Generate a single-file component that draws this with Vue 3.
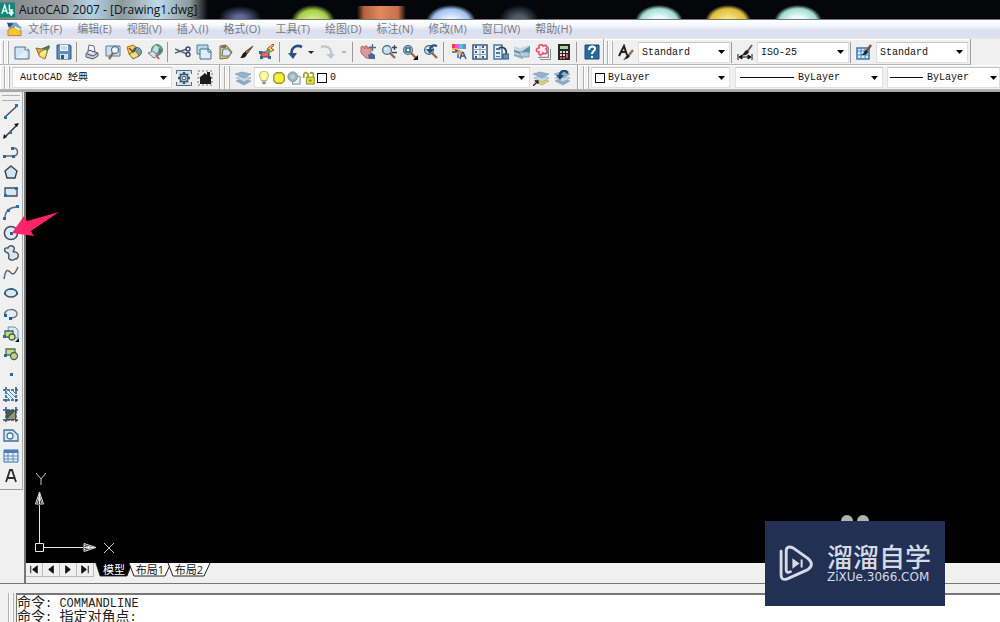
<script setup>
const menus = ['文件(F)', '编辑(E)', '视图(V)', '插入(I)', '格式(O)', '工具(T)', '绘图(D)', '标注(N)', '修改(M)', '窗口(W)', '帮助(H)']

const glass = (x, y) => `<path d="M${x + 3} ${y + 3}l5 5" stroke="#9a6a42" stroke-width="2.400"/><circle cx="${x}" cy="${y}" r="4.400" fill="#c5dff1" stroke="#54677b" stroke-width="1.300"/><path d="M${x - 2} ${y}q0-2 2-2" fill="none" stroke="#fff"/>`
const hatchFrame = (fill) => `<path d="M3 3h10v10H3z" fill="${fill}"/><path d="M0 3h16M0 13h16M3 0v16M13 0v16" stroke="#28517a" stroke-width="1.500" stroke-dasharray="3 1"/>`
const sheets = (mid, low) => `<path d="M1 11l6-2 9 2-7 4z" fill="${low}" stroke="#7b93a6" stroke-width=".5"/><path d="M1 8l6-2 9 2-7 4z" fill="${mid}" stroke="#7b93a6" stroke-width=".5"/><path d="M0 4l7-2 9 2-7 4z" fill="#8fb4d0" stroke="#6a8ba5" stroke-width=".5"/>`

const icons = {
  new: '<path d="M1 3h10l4 3v9H1z" fill="#cfe4f4" stroke="#4c7394"/><path d="M11 3v3h4" fill="#fff" stroke="#4c7394"/><path d="M2 14L12 6v8z" fill="#f2faff" opacity=".6"/>',
  open: '<path d="M1 4l5 1 8-3-4 12-6-3z" fill="#e3b14a" stroke="#8a6a2c"/><path d="M4 9l10-7-4 13-6-3z" fill="#ffe07a" stroke="#96762f"/><path d="M7 5l7-4 1 3-4 3z" fill="#4d7a66"/><path d="M6 10l5-4" stroke="#fff5bd"/>',
  save: '<path d="M1 1h13l1 1v13H1z" fill="#5b8fc0" stroke="#2c587f"/><path d="M4 1h8v6H4z" fill="#f2f8fc"/><path d="M5 3h6M5 5h6" stroke="#a8bccb"/><path d="M4 10h8v5H4z" fill="#d5e1e9"/><path d="M5 11h3v4H5z" fill="#315977"/>',
  print: '<path d="M4 7l1-6 5 1 1 6z" fill="#f6f8fc" stroke="#66708b"/><path d="M2 10l3-4 9 3v3l-5 3-7-2z" fill="#c5cbd9" stroke="#505a77"/><path d="M3 10l6 2 5-3" fill="none" stroke="#4f5775"/><path d="M5 8l5 2" stroke="#fff"/>',
  preview: '<path d="M1 2h14v10H1z" fill="#cfe2f2" stroke="#557da1"/><path d="M8 9l-4 6" stroke="#946b4d" stroke-width="2.400"/><circle cx="10" cy="6" r="3.500" fill="#f4fbff" stroke="#5b7891" stroke-width="1.300"/>',
  publish: '<path d="M1 3l6-2 6 4-3 6-7-1z" fill="#f7cc5a" stroke="#a86f28"/><circle cx="11" cy="8" r="4.500" fill="#72a8ae" stroke="#496d82"/><path d="M3 4l4 4 3-4" fill="none" stroke="#6a3d30" stroke-width="1.300"/><path d="M3 10l7-3 3 5-6 3z" fill="#f1dd7c" stroke="#7b6b3d"/>',
  globe: '<circle cx="10" cy="6" r="5.400" fill="#67a987" stroke="#537781"/><path d="M8 1l5 3-3 5-5-2z" fill="#c3dfd8"/><path d="M12 3l3 4-4 4z" fill="#457b9d"/><path d="M1 9l5-2 5 5-4 2z" fill="#d8dfe9" stroke="#6a7894"/><path d="M9 11l3 4" stroke="#c35c4e" stroke-width="2"/>',
  cut: '<path d="M0 5l12 5M0 9l12-4" stroke="#5b6575" stroke-width="1.400"/><circle cx="13" cy="5" r="2" fill="none" stroke="#344c74" stroke-width="1.400"/><circle cx="13" cy="10.500" r="2" fill="none" stroke="#344c74" stroke-width="1.400"/>',
  copy: '<path d="M1 1h11v9H1z" fill="#b9d7ec" stroke="#547c9d"/><path d="M4 5h9l2 2v8H4z" fill="#dceef9" stroke="#416e91"/><path d="M12 5v3h3" fill="none" stroke="#416e91"/>',
  paste: '<path d="M3 2l6-1 6 7-4 6-8 1z" fill="#e5c76d" stroke="#7b6542"/><path d="M5 1h4v3H4z" fill="#77736e"/><path d="M6 5h5l3 4-2 3H5z" fill="#d8ebf4" stroke="#547695"/>',
  brush: '<path d="M15 2l-6 8-2-2z" fill="#a0664c" stroke="#5a4038"/><path d="M7 8l2 2c-1 4-4 4-7 4 2-1 2-5 5-6z" fill="#171b22"/>',
  spark: '<path d="M14 0L8 5l3 1-4 4 8-4-3-2 3-3z" fill="#ffdf3e" stroke="#a7492b"/><path d="M2 8h8v5H2z" fill="#f0665a" stroke="#7b2739"/><path d="M7 6h4v3H7z" fill="#49a5a0"/><path d="M0 7h3v3H0zM9 12h3v3H9zM1 12h3v3H1z" fill="#2d6a93"/>',
  undo: '<path d="M15 3C9 0 3 4 5 11" fill="none" stroke="#284f82" stroke-width="2.600"/><path d="M1 9h9l-4 6z" fill="#284f82"/>',
  redo: '<path d="M1 3c6-2 11 1 10 8" fill="none" stroke="#c1c6cc" stroke-width="2.400"/><path d="M6 10h9l-4 5z" fill="#c1c6cc"/>',
  pan: '<path d="M1 3l2-1 2 3 0-3 2 0 1 3 1-2 2 0v7l-2 4H6L1 9z" fill="#dd9a97" stroke="#a86669"/><path d="M12.500 0v7M9 3.500h7" stroke="#476c92" stroke-width="1.300"/><path d="M8 11l4-2 3 2v4H9z" fill="#426c91"/>',
  zoom: glass(6, 6) + '<path d="M11 3.500h5M13.500 1v5M11 8.500h5" stroke="#334b64" stroke-width="1.300"/>',
  zoomwin: glass(6, 6) + '<path d="M4 4h4v4H4z" fill="#fff" stroke="#31658f" stroke-width="1.500"/><path d="M16 11v5h-5z" fill="#111"/>',
  zoomprev: glass(6, 6) + '<path d="M14 2C9 0 7 3 7 6" fill="none" stroke="#27547d" stroke-width="2.200"/><path d="M3 5h8L7 10z" fill="#27547d"/>',
  props: '<path d="M1 0h3v5H1z" fill="#ff365c"/><path d="M4 0h4v5H4z" fill="#ff4de0"/><path d="M8 0h4v5H8z" fill="#48c6db"/><path d="M12 0h3v5h-3z" fill="#568df2"/><path d="M1 4h6v2H1z" fill="#ffb33e"/><path d="M1 8h6v6M11 8l-2 7M12 8l3 7M10 12h4M4 6l9 3" fill="none" stroke="#425c78" stroke-width="1.500"/><path d="M5 8l5-2 1 3-4 2z" fill="#e8a46d"/>',
  design: '<path d="M1 1h14v14H1z" fill="#eff4f8" stroke="#3c5e7d" stroke-width="1.600"/><path d="M8 1v14M1 5.500h14M1 10.500h14" stroke="#8a9eb1"/><path d="M3 3h3M10 3h3M3 8h3M10 8h3M3 13h3M10 13h3" stroke="#345978" stroke-width="2" stroke-dasharray="2 1"/>',
  palette: '<path d="M1 1h8v14H1z" fill="#e3edf5" stroke="#48779d" stroke-width="1.500"/><path d="M3 4h4v2H3zM3 8h4v2H3zM3 12h4v1H3z" fill="#477b9e"/><path d="M6 4c6-2 8 2 7 7" fill="none" stroke="#283d58" stroke-width="1.700"/><path d="M10 10h6v5h-6z" fill="#6a93b4" stroke="#32557a"/>',
  sheet: '<path d="M0 2l6 2 10-3v10l-4 3-12-3z" fill="#c6d9df"/><path d="M0 6l7 2 9-6v6l-6 3-10-3z" fill="#5893a8"/><path d="M6 8h9v5H6z" fill="#b3cbd8" stroke="#668ba1" stroke-width=".6"/><path d="M0 11l9 3" stroke="#8badbb" stroke-width="2"/>',
  markup: '<path d="M5 5h8v8H5z" fill="#fff" stroke="#a4aab7"/><path d="M4 8c-4 0-3-4 0-4-1-4 3-4 4-2 4-2 5 2 3 3 3 3 0 6-3 4-2 3-5 2-4-1z" fill="#ffe7e9" stroke="#e64f64" stroke-width="1.600"/><path d="M3 13.500h10.500V3M5 15.500h10.500V5" fill="none" stroke="#888f9e"/>',
  calc: '<path d="M2 0h12v16H2z" fill="#292629"/><path d="M4 2h8v3H4z" fill="#a6d098"/><path d="M4 7h2v2H4zM7 7h2v2H7zM10 7h2v2h-2zM4 10h2v2H4zM7 10h2v2H7z" fill="#dbd9dc"/><path d="M10 10h2v4h-2zM4 13h2v2H4zM7 13h2v2H7z" fill="#e35a50"/>',
  help: '<path d="M1 1h14v14H1z" fill="#286a9e" stroke="#194a73"/><path d="M5 6c0-5 7-4 6-1 0 2-3 2-3 5" fill="none" stroke="#fff" stroke-width="2"/><circle cx="8" cy="13" r="1.200" fill="#fff"/>',
  gear: '<path d="M.5 4V.5h15V4M.5 12v3.500h15V12" fill="#d6e1ea" stroke="#456e8f"/><path d="M8 2v12M2 8h12M4 4l8 8M4 12l8-8" stroke="#385471" stroke-width="2.300"/><circle cx="8" cy="8" r="4" fill="#b8cbd9" stroke="#385471" stroke-width="1.400"/><circle cx="8" cy="8" r="1.800" fill="#fff" stroke="#385471"/>',
  home: '<path d="M1 1h14v14H1z" fill="none" stroke="#777" stroke-dasharray="2 2"/><path d="M2 8l6-5 2 2V2h3v4l2 2h-1v6H3V8z" fill="#191b1e"/>',
  layers: sheets('#c8d9e6', '#8fabc0'),
  layerprev: sheets('#c8d9e6', '#edda4b') + '<path d="M0 16l5-5M2 11h3v3" fill="none" stroke="#222" stroke-width="1.300"/>',
  layerback: sheets('#c8d9e6', '#8fabc0') + '<path d="M14 3C10-1 6 1 6 6" fill="none" stroke="#214c74" stroke-width="2.500"/><path d="M2 5h8l-4 5z" fill="#214c74"/>',
  textstyle: '<path d="M1 12L6 2l3 9M3 8h5" fill="none" stroke="#222" stroke-width="2"/><path d="M15 6l-4 5" stroke="#9c7052" stroke-width="2.500"/><path d="M10 10l2 2c-2 3-4 3-7 4 3-2 3-5 5-6z" fill="#202226"/>',
  dimstyle: '<path d="M1 10v6M15 10v6M2 13h12M2 13l3-2v4zM14 13l-3-2v4z" stroke="#111" fill="#111"/><path d="M15 1l-5 7" stroke="#796251" stroke-width="2"/><path d="M10 6l2 2c-2 4-5 3-8 4 3-2 3-5 6-6z" fill="#222"/>',
  tablestyle: '<path d="M1 4h12v11H1z" fill="#d7eafa" stroke="#3277b3" stroke-width="1.500"/><path d="M1 7h12M1 11h12M5 4v11M9 4v11" stroke="#4c89bd"/><path d="M15 1l-5 7" stroke="#76543c" stroke-width="2.500"/><path d="M10 6l2 2c-1 3-4 3-7 3 3-1 3-4 5-5z" fill="#222"/>',
  bulb: '<path d="M5 11c0-2-2-3-2-6a5 5 0 0 1 10 0c0 3-2 4-2 6z" fill="#fff7a3" stroke="#a79c5a"/><path d="M6 12h4v3H6z" fill="#8291a4"/>',
  sun: '<path d="M5 2h6l3 3v6l-3 3H5l-3-3V5z" fill="#f8ed38" stroke="#9a982b" stroke-width="1.500"/>',
  freeze: '<path d="M8 6h7v9H6z" fill="#e6f1f8" stroke="#6a8698"/><circle cx="6.500" cy="6.500" r="5.500" fill="#9eb6bd" stroke="#788f98"/><circle cx="6.500" cy="6.500" r="2.500" fill="#bdd3c8"/>',
  lock: '<path d="M2 8V4q2-5 5 0v3" fill="none" stroke="#a1a22b" stroke-width="2"/><path d="M5 7h9v8H5z" fill="#e4de39" stroke="#85882c"/><path d="M13 7V3q-2-2-4 0" fill="none" stroke="#a1a22b" stroke-width="2"/><path d="M8 10h3v2H8z" fill="#8d8a28"/>',
  line: '<path d="M2 14L14 3" stroke="#36475a" stroke-width="1.300"/><path d="M1 13h3v3H1zM12 1h3v3h-3z" fill="#2c74ad"/>',
  xline: '<path d="M2 14L14 2" stroke="#27323e" stroke-width="1.500"/><path d="M0 16l1-5 3 3zM16 0l-5 1 3 3z" fill="#171b21"/><path d="M6 8h3v3H6z" fill="#2b75ac"/>',
  pline: '<path d="M2 12h8M10 4c6 0 6 8 0 8" fill="none" stroke="#5a697a" stroke-width="1.500"/><path d="M0 11h3v3H0zM9 11h3v3H9zM8 3h3v3H8z" fill="#226ba5"/>',
  polygon: '<path d="M8 2l6 5-2 7H4L2 7z" fill="#d2e5f2" stroke="#38434e" stroke-width="1.400"/>',
  rect: '<path d="M2 4h12v8H2z" fill="#d4e7f4" stroke="#3d4c5d" stroke-width="1.300"/><path d="M1 10h3v3H1zM12 3h3v3h-3z" fill="#286c9f"/>',
  arc: '<path d="M2 14C2 7 7 3 14 3" fill="none" stroke="#5c6c7c" stroke-width="1.500"/><path d="M0 13h3v3H0zM4 5h3v3H4zM13 1h3v3h-3z" fill="#286fa7"/>',
  circle: '<circle cx="8" cy="8" r="6.600" fill="#dbeaf3" stroke="#3e4b58" stroke-width="1.500"/><path d="M7 7h3v3H7z" fill="#1b6297"/>',
  cloud: '<path d="M5 8C0 7 1 2 5 3c1-4 8-2 6 2-1 1-1 2 0 2 5-1 6 7 1 7-2 2-8 1-6-3 0-2-1-2-1-3z" fill="#dce6ec" stroke="#485461" stroke-width="1.400"/>',
  spline: '<path d="M1 14C3 1 6 6 8 8s4 1 7-6" fill="none" stroke="#5d6770" stroke-width="1.500"/>',
  ellipse: '<ellipse cx="8" cy="8" rx="6" ry="4" fill="#d8e9f5" stroke="#37536e" stroke-width="1.500"/><path d="M1 7h2v3H1zM7 3h3v2H7zM13 7h2v3h-2z" fill="#21669c"/>',
  ellarc: '<path d="M2 9C0 2 15 2 14 8c0 4-4 4-7 4" fill="#e3ecf3" stroke="#69798a" stroke-width="1.500"/><path d="M1 8h3v3H1zM6 11h3v3H6z" fill="#1c6096"/>',
  insert: '<path d="M5 1h7l3 3v8H6z" fill="#d9ebf8" stroke="#6b91b0"/><path d="M2 5h8v6H2z" fill="#c6dc77" stroke="#3e626d" stroke-width="1.300"/><circle cx="9" cy="11" r="3" fill="#d8e69a" stroke="#47665b" stroke-width="1.300"/><path d="M0 9h3v3H0z" fill="#267099"/><path d="M16 12v4h-4z" fill="#111"/>',
  block: '<path d="M3 3h9v6H3z" fill="#cbdc73" stroke="#4c6d6f" stroke-width="1.300"/><circle cx="11" cy="10" r="3.500" fill="#bed37b" stroke="#466173" stroke-width="1.300"/><path d="M1 8h3v3H1z" fill="#267099"/>',
  point: '<path d="M7 7h3v3H7z" fill="#2d6c95"/>',
  hatch: hatchFrame('#e8f3fb') + '<path d="M3 5l8 8M5 3l8 8M9 3l4 4M3 9l4 4" stroke="#438bc0" stroke-width="1"/>',
  gradient: hatchFrame('#4a5750') + '<path d="M4 12l8-8v8z" fill="#8f9870"/>',
  region: '<path d="M1 3h9l5 5v6H1z" fill="#d8e9f5" stroke="#3d7197" stroke-width="1.300"/><circle cx="7" cy="9" r="3" fill="#f8fafb" stroke="#427aa3" stroke-width="1.300"/>',
  table: '<path d="M1 2h14v12H1z" fill="#e7f1f9" stroke="#3a6cb0"/><path d="M1 2h14v3H1z" fill="#4b7fbc"/><path d="M1 8h14M1 11h14M5 5v9M10 5v9" stroke="#618bbf"/>',
  mtext: '<path d="M3 14L7 2h2l4 12M5 10h6" fill="none" stroke="#292b2f" stroke-width="1.800"/>',
  drop: '<path d="M5 7h6l-3 3z" fill="#222"/>',
  dropoff: '<path d="M5 7h6l-3 3z" fill="#bbb"/>',
}

const standard = [
  ['new', 'open', 'save'],
  ['print', 'preview', 'publish', 'globe'],
  ['cut', 'copy', 'paste', 'brush', 'spark'],
  ['undo', 'drop', 'redo', 'dropoff'],
  ['pan', 'zoom', 'zoomwin', 'zoomprev'],
  ['props', 'design', 'palette', 'sheet', 'markup', 'calc'],
  ['help'],
]
const styles = [
  { icon: 'textstyle', value: 'Standard', label: '文字样式' },
  { icon: 'dimstyle', value: 'ISO-25', label: '标注样式' },
  { icon: 'tablestyle', value: 'Standard', label: '表格样式' },
]
const drawTools = ['line', 'xline', 'pline', 'polygon', 'rect', 'arc', 'circle', 'cloud', 'spline', 'ellipse', 'ellarc', 'insert', 'block', 'point', 'hatch', 'gradient', 'region', 'table', 'mtext']
const layerIcons = ['bulb', 'sun', 'freeze', 'lock']
const navPaths = ['M5 3v8M12 3v8L7 7z', 'M11 3v8L6 7z', 'M6 3v8l5-4z', 'M5 3v8l5-4zM12 3v8']
const tabs = ['模型', '布局1', '布局2']
</script>

<template>
  <div class="app">
    <header class="title">
      <svg class="logo" viewBox="0 0 16 16"><path d="M0 0h16v16H0z" fill="#168477" /><path d="M2 12L5 3l3 9M3 9h5M10 2v6h4M9 11h5M12 8v6" fill="none" stroke="#e5fff7" stroke-width="1.500" /><circle cx="12" cy="11" r="2" fill="none" stroke="#fff" /></svg>
      <span>AutoCAD 2007 - [Drawing1.dwg]</span>
    </header>

    <nav class="menu">
      <svg class="doc" viewBox="0 0 16 16"><path d="M3 1h7l5 5v9H3z" fill="#7ba4d2" /><path d="M1 9l5-3 9 4v5H1z" fill="#f4c437" stroke="#b7851d" /><path d="M0 1l7 1-5 5z" fill="#234d87" /><path d="M8 6l6 3" stroke="#fff0a3" stroke-width="2" /></svg>
      <button v-for="m in menus" :key="m" type="button">{{ m }}</button>
    </nav>

    <div class="row">
      <div class="bar standard">
        <i class="grip"></i>
        <div v-for="(group, g) in standard" :key="g" class="group">
          <button v-for="n in group" :key="n" type="button" class="tool" :class="{ slim: n.startsWith('drop') }" :aria-label="n"><svg viewBox="0 0 16 16" v-html="icons[n]"></svg></button>
        </div>
      </div>
      <div class="bar styles">
        <i class="grip"></i>
        <div v-for="s in styles" :key="s.label" class="group">
          <button type="button" class="tool wide" :aria-label="s.label"><svg viewBox="0 0 16 16" v-html="icons[s.icon]"></svg></button>
          <div class="combo style">
            <select :aria-label="s.label"><option>{{ s.value }}</option></select>
            <svg class="arrow" viewBox="0 0 7 4"><path d="M0 0h7L3.500 4z" /></svg>
          </div>
        </div>
      </div>
    </div>

    <div class="row second">
      <div class="bar workspaces">
        <i class="grip"></i>
        <div class="combo workspace">
          <select aria-label="工作空间"><option>AutoCAD 经典</option></select>
          <svg class="arrow" viewBox="0 0 7 4"><path d="M0 0h7L3.500 4z" /></svg>
        </div>
        <button v-for="n in ['gear', 'home']" :key="n" type="button" class="tool" :aria-label="n"><svg viewBox="0 0 16 16" v-html="icons[n]"></svg></button>
      </div>
      <div class="bar layers">
        <i class="grip"></i>
        <button type="button" class="tool wide" aria-label="图层"><svg viewBox="0 0 16 16" v-html="icons.layers"></svg></button>
        <div class="combo layer">
          <svg v-for="n in layerIcons" :key="n" class="state" viewBox="0 0 16 16" v-html="icons[n]"></svg>
          <i class="swatch"></i>
          <select aria-label="当前图层"><option>0</option></select>
          <svg class="arrow" viewBox="0 0 7 4"><path d="M0 0h7L3.500 4z" /></svg>
        </div>
        <button v-for="n in ['layerprev', 'layerback']" :key="n" type="button" class="tool" :aria-label="n"><svg viewBox="0 0 16 16" v-html="icons[n]"></svg></button>
      </div>
      <div class="bar properties">
        <i class="grip"></i>
        <div class="combo color">
          <i class="swatch"></i>
          <select aria-label="颜色"><option>ByLayer</option></select>
          <svg class="arrow" viewBox="0 0 7 4"><path d="M0 0h7L3.500 4z" /></svg>
        </div>
        <div class="combo linetype">
          <i class="stroke"></i>
          <select aria-label="线型"><option>ByLayer</option></select>
          <svg class="arrow" viewBox="0 0 7 4"><path d="M0 0h7L3.500 4z" /></svg>
        </div>
        <div class="combo weight">
          <i class="stroke short"></i>
          <select aria-label="线宽"><option>ByLayer</option></select>
          <svg class="arrow" viewBox="0 0 7 4"><path d="M0 0h7L3.500 4z" /></svg>
        </div>
      </div>
    </div>

    <main class="work">
      <aside class="side">
        <div class="palette">
          <i class="hgrip"></i>
          <div class="tools">
            <button v-for="n in drawTools" :key="n" type="button" class="tool" :aria-label="n"><svg viewBox="0 0 16 16" v-html="icons[n]"></svg></button>
          </div>
        </div>
        <svg class="pointer" viewBox="0 0 50 28"><path d="M2 22L14 5l3 5L49 1 21 20l3 5z" fill="#fa2468" /></svg>
      </aside>
      <section class="drawing">
        <div class="canvas">
          <svg class="ucs" viewBox="0 0 90 84">
            <g fill="none" stroke="#e6e6e6">
              <path d="M10.500 70V32M15 74.500h39M6.500 70.500h8v8h-8zM10.500 19l-4 12h8zM10.500 21v10M8.500 30l2-8 2 8M67 74.500l-12-4v8zM65 74.500H55M55 72.500l9 2-9 2" />
              <path d="M7 0l5 6 5-6M12 6v6M75 70l10 10M85 70L75 80" stroke="#c9c9c9" />
            </g>
          </svg>
          <div class="ears"><i></i><i></i></div>
        </div>
        <div class="sheets">
          <button v-for="(p, i) in navPaths" :key="i" type="button" class="nav" :aria-label="'nav ' + i"><svg viewBox="0 0 17 14"><path :d="p" fill="#111" stroke="#111" /></svg></button>
          <div class="tabs">
            <button v-for="(t, i) in tabs" :key="t" type="button" class="tab" :class="{ active: i === 0 }">
              <svg viewBox="0 0 44 14" preserveAspectRatio="none"><path d="M1 0l5 13h31l6-13" /></svg>
              <span>{{ t }}</span>
            </button>
          </div>
        </div>
      </section>
    </main>

    <section class="command">
      <i class="grip"></i>
      <div class="log">
        <p><b>命令</b>: COMMANDLINE</p>
        <p><b>命令</b>: <b>指定对角点</b>:</p>
      </div>
    </section>

    <div class="mark">
      <svg viewBox="0 0 34 36">
        <path d="M2 6v23q0 6 6 4l20-9q7-5 0-11L14 3Q7 0 7 6v18q0 4 4 2" fill="none" stroke="#d6dae5" stroke-width="2.800" stroke-linecap="round" stroke-linejoin="round" />
        <path d="M13 13v10l7-5zM21 14h2v8h-2z" fill="#d6dae5" />
      </svg>
      <div class="words"><strong>溜溜自学</strong><span>ZiXUe.3066.COM</span></div>
    </div>
  </div>
</template>

<style>
body { background: #f0f0f0; overflow: hidden; }
</style>

<style scoped>
.app { position: relative; display: flex; flex-direction: column; height: 100vh; background: #f0f0f0; font-family: "Open Sans", "Noto Sans CJK SC", sans-serif; font-size: 12px; color: #111; overflow: hidden; }
.app * { box-sizing: border-box; }
button { margin: 0; padding: 0; border: 0; background: none; font: inherit; color: inherit; }
svg { display: block; flex: none; }
i { display: block; flex: none; }

.title { display: flex; align-items: center; gap: 4px; flex: none; height: 20px; border-bottom: 1px solid #777; white-space: nowrap;
  background:
    radial-gradient(ellipse 22px 17px at 313px 22px, #e4f09a 10%, #a5cf45 70%, transparent 100%),
    linear-gradient(90deg, transparent 357px, #b5623f 364px, #e08a5e 380px, #c9714c 398px, transparent 406px) 0 6px no-repeat,
    radial-gradient(ellipse 25px 17px at 451px 22px, #eef7ff 20%, #9fc0ee 75%, transparent 100%),
    radial-gradient(ellipse 20px 15px at 519px 20px, #505c68 30%, transparent 100%),
    radial-gradient(ellipse 24px 17px at 659px 22px, #ecfdff 30%, #a3dcd2 78%, transparent 100%),
    radial-gradient(ellipse 23px 17px at 728px 22px, #fbe789 20%, #dfbd3c 78%, transparent 100%),
    radial-gradient(ellipse 24px 17px at 798px 22px, #ecfdff 30%, #a3dcd2 78%, transparent 100%),
    radial-gradient(ellipse 22px 12px at 240px 18px, #646b9c 20%, transparent 100%),
    linear-gradient(90deg, #7f8586 0, #9da2a4 60px, #b2d2e6 92px, #8f9a9c 122px, #bcdcec 158px, #8e989b 190px, transparent 208px),
    #04060a; }
.logo { width: 15px; height: 16px; }

.menu { display: flex; align-items: center; gap: 15px; flex: none; height: 18px; padding-left: 7px; background: linear-gradient(#fff 0, #f6f7fb 30%, #dbdff0 60%, #dde1f1 100%); color: #777b83; font-size: 11px; white-space: nowrap; }
.menu .doc { width: 15px; height: 16px; margin-right: -9px; }
.menu button { line-height: 18px; }

.row { display: flex; flex: none; height: 27px; border-top: 1px solid #e6e6e6; background: #f0f0f0; }
.second { border-top: 0; border-bottom: 2px solid #a9a9a9; }
.bar { display: flex; align-items: center; flex: none; padding: 1px 0 0 4px; border-right: 1px solid #a2a2a2; border-bottom: 1px solid #b5b5b5; box-shadow: inset 1px 1px #fff; }
.grip { width: 6px; height: 23px; margin-right: 2px; border: solid #b0b0b0; border-width: 0 1px; background: linear-gradient(90deg, #fff 1px, #f0f0f0 1px, #f0f0f0 3px, #fff 3px); }
.group { display: flex; align-items: center; }
.group + .group { margin-left: 2px; padding-left: 4px; border-left: 1px solid #999; }
.tool { display: flex; align-items: center; justify-content: center; flex: none; width: 21px; height: 20px; }
.tool svg { width: 16px; height: 16px; }
.tool.slim { width: 12px; }
.tool.wide { width: 24px; }
.standard { width: 604px; padding-left: 3px; }

.combo { display: flex; align-items: center; flex: none; height: 21px; padding: 0 4px; border: 1px solid #e0e0e0; border-top-color: #c4c4c4; background: #fff; font-family: "Liberation Mono", "Noto Sans CJK SC", monospace; font-size: 10px; }
.combo select { flex: 1; min-width: 0; height: 17px; margin: 0; padding: 0; border: 0; outline: 0; appearance: none; background: none; color: #111; font: inherit; }
.arrow { width: 7px; height: 4px; }
.style { width: 92px; padding-left: 3px; }
.styles .group + .group { margin-left: 1px; padding-left: 1px; }
.styles { width: 367px; padding-left: 3px; }
.styles .grip { margin-right: 1px; }
.workspaces { width: 220px; }
.workspace { width: 160px; margin-right: 1px; padding-left: 7px; }
.layers { width: 358px; }
.layer { width: 276px; padding-left: 2px; }
.layers .wide { width: 22px; }
.state { width: 14px; height: 14px; margin-right: 1px; }
.swatch { width: 10px; height: 10px; margin-right: 3px; border: 1px solid #111; background: #fff; }
.properties { flex: 1; padding-left: 5px; border-right: 0; }
.color { width: 139px; margin-right: 3px; padding-left: 3px; }
.linetype { width: 148px; margin: 0 4px 0 2px; }
.weight { flex: 1; min-width: 112px; padding: 0 2px; }
.stroke { width: 54px; height: 1px; margin-right: 4px; background: #111; }
.stroke.short { width: 33px; }

.work { display: flex; flex: 1; min-height: 0; }
.side { position: relative; flex: none; width: 26px; border-right: 2px solid #777; }
.palette { width: 23px; padding-top: 3px; border-right: 1px solid #aaa; border-bottom: 1px solid #999; }
.hgrip { height: 6px; margin: 0 2px; border: solid #b0b0b0; border-width: 1px 0; }
.tools { display: flex; flex-direction: column; justify-content: space-between; height: 388px; padding-bottom: 3px; }
.pointer { position: absolute; z-index: 2; left: 10px; top: 119px; width: 50px; height: 28px; }
.drawing { display: flex; flex: 1; flex-direction: column; min-width: 0; }
.canvas { position: relative; flex: 1; background: #000; }
.ucs { position: absolute; left: 3px; bottom: 6px; width: 90px; height: 84px; }
.ears { position: absolute; right: 131px; bottom: 36px; display: flex; gap: 4px; }
.ears i { width: 12px; height: 12px; border-radius: 50%; background: #b5b2ac; }
.sheets { display: flex; flex: none; height: 20px; }
.nav { width: 17px; height: 14px; border-right: 1px solid #bbb; border-bottom: 1px solid #bbb; }
.nav svg { width: 16px; height: 13px; }
.tabs { display: flex; margin-left: 1px; }
.tab { position: relative; width: 44px; height: 14px; margin-right: -5px; }
.tab svg { width: 44px; height: 14px; fill: #fff; stroke: #222; }
.tab span { position: absolute; inset: 0; line-height: 13px; text-align: center; font-size: 11px; white-space: nowrap; }
.tab.active { width: 38px; color: #fff; }
.tab.active svg { width: 38px; fill: #000; }

.command { display: flex; flex: none; height: 39px; padding: 9px 0 0 8px; border-top: 1px solid #777; }
.command .grip { height: 30px; }
.log { flex: 1; border: solid #777; border-width: 2px 0 0 1px; background: #fff; font-family: "Liberation Mono", "Noto Sans CJK SC", monospace; font-size: 12px; color: #222; }
.log p { height: 14px; margin: 0; line-height: 14px; white-space: nowrap; }
.log b { font-family: "Noto Sans CJK SC", sans-serif; font-size: 14px; font-weight: 400; line-height: 12px; }

.mark { position: absolute; z-index: 3; right: 55px; bottom: 16px; display: flex; align-items: center; gap: 13px; width: 180px; height: 85px; padding: 0 0 4px 14px; background: #223054; color: #d6dae5; }
.mark svg { width: 35px; height: 37px; margin-top: 4px; }
.words { display: flex; flex-direction: column; font-family: "DejaVu Sans", sans-serif; white-space: nowrap; }
.words strong { font-family: "Noto Sans CJK SC", sans-serif; font-size: 26px; font-weight: 500; line-height: 30px; }
.words span { font-size: 12px; line-height: 12px; }
</style>
